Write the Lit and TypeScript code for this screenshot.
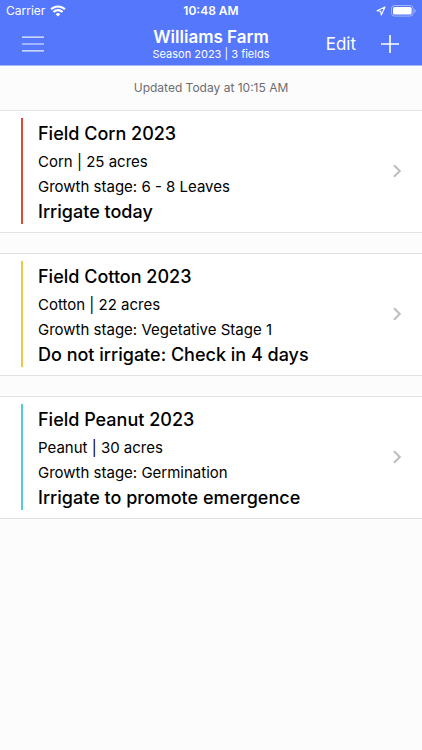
import { LitElement, html, css } from "lit";
import { customElement, property } from "lit/decorators.js";

interface Field {
  name: string;
  crop: string;
  acres: number;
  stage: string;
  advice: string;
  status: "urgent" | "wait" | "emerge";
}

const FIELDS: Field[] = [
  { name: "Field Corn 2023", crop: "Corn", acres: 25, stage: "6 - 8 Leaves", advice: "Irrigate today", status: "urgent" },
  { name: "Field Cotton 2023", crop: "Cotton", acres: 22, stage: "Vegetative Stage 1", advice: "Do not irrigate: Check in 4 days", status: "wait" },
  { name: "Field Peanut 2023", crop: "Peanut", acres: 30, stage: "Germination", advice: "Irrigate to promote emergence", status: "emerge" },
];

@customElement("status-bar")
export class StatusBar extends LitElement {
  static styles = css`
    :host {
      display: grid;
      grid-template-columns: 1fr auto 1fr;
      align-items: center;
      height: 22px;
      padding: 0 6px;
      font-size: 12px;
      line-height: 22px;
    }
    .side { display: flex; align-items: center; gap: 5px; }
    .end { justify-content: flex-end; }
    .time { font-weight: 600; }
    svg { display: block; }
  `;

  render() {
    return html`
      <div class="side">
        <span>Carrier</span>
        <svg width="16" height="12" viewBox="0 0 16 12" fill="none" stroke="#fff" stroke-width="2.1" aria-hidden="true">
          <path d="M1.1 4.3a9.8 9.8 0 0 1 13.8 0" />
          <path d="M3.5 7a6.3 6.3 0 0 1 9 0" />
          <path d="M8 11.6 5.7 9.2a3.3 3.3 0 0 1 4.6 0Z" fill="#fff" stroke="none" />
        </svg>
      </div>
      <span class="time">10:48 AM</span>
      <div class="side end">
        <svg width="10" height="10" viewBox="0 0 10 10" fill="none" stroke="#fff" stroke-width="1.1" stroke-linejoin="round" aria-hidden="true">
          <path d="M9 1 1 4.8l3.7.5.6 3.7Z" />
        </svg>
        <svg width="25" height="12" viewBox="0 0 25 12" aria-hidden="true">
          <rect x=".5" y=".5" width="21.6" height="10.6" rx="3" fill="none" stroke="#fff" stroke-opacity=".45" />
          <rect x="2" y="2" width="18.6" height="7.6" rx="1.6" fill="#fff" />
          <path d="M23.3 4v3.8a2 2 0 0 0 0-3.8Z" fill="#fff" fill-opacity=".5" />
        </svg>
      </div>
    `;
  }
}

@customElement("field-card")
export class FieldCard extends LitElement {
  @property({ attribute: false }) field!: Field;

  static styles = css`
    :host { display: block; }
    .card {
      display: flex;
      align-items: center;
      padding: 7px 20px 8px 21px;
      background: #fff;
      border-top: 1px solid #e2e2e5;
      border-bottom: 1px solid #e2e2e5;
      color: #000;
      text-decoration: none;
    }
    .body { flex: 1; padding-left: 15px; border-left: 2px solid; }
    .urgent { border-color: #dc4a2b; }
    .wait { border-color: #f0c648; }
    .emerge { border-color: #55cbd6; }
    h2, p { margin: 0; font-weight: 400; font-size: 15px; line-height: 26px; }
    .meta { line-height: 24px; }
    h2 { font-size: 18px; font-weight: 500; line-height: 32px; }
    .advice { font-size: 18px; font-weight: 500; line-height: 24px; }
    svg { display: block; }
  `;

  render() {
    const f = this.field;
    return html`
      <a class="card" href="#">
        <div class="body ${f.status}">
          <h2>${f.name}</h2>
          <p class="meta">${f.crop} | ${f.acres} acres</p>
          <p>Growth stage: ${f.stage}</p>
          <p class="advice">${f.advice}</p>
        </div>
        <svg width="10" height="14" viewBox="0 0 10 14" fill="none" stroke="#bdbdbf" stroke-width="2" aria-hidden="true">
          <path d="M2 1.2 7.8 7 2 12.8" />
        </svg>
      </a>
    `;
  }
}

@customElement("app-root")
export class AppRoot extends LitElement {
  static styles = css`
    :host {
      display: block;
      min-height: 100vh;
      background: #fcfcfc;
      font-family: Inter, "Liberation Sans", sans-serif;
    }
    .top { background: #5577fb; color: #fff; border-bottom: 1px solid #a9b8f5; }
    nav {
      display: grid;
      grid-template-columns: 1fr auto 1fr;
      align-items: center;
      height: 43px;
      padding: 0 22px;
    }
    .title { text-align: center; }
    h1 { margin: 0; font-size: 17px; font-weight: 600; line-height: 20px; }
    .season { margin: 0; font-size: 11px; line-height: 14px; }
    .actions { display: flex; justify-content: flex-end; align-items: center; gap: 24px; }
    button {
      padding: 0;
      border: 0;
      background: none;
      color: inherit;
      font: inherit;
      font-size: 17px;
      line-height: 24px;
      justify-self: start;
      cursor: pointer;
    }
    svg { display: block; }
    .updated {
      margin: 0;
      font-size: 12px;
      line-height: 44px;
      text-align: center;
      color: #6d6d70;
    }
    .list { display: flex; flex-direction: column; gap: 20px; }
  `;

  render() {
    return html`
      <header class="top">
        <status-bar></status-bar>
        <nav>
          <button aria-label="Menu">
            <svg width="22" height="16" viewBox="1 0 22 16" stroke="#fff" stroke-width="1.2" stroke-opacity=".9">
              <path d="M1 1.2h22M1 8h22M1 14.8h22" />
            </svg>
          </button>
          <div class="title">
            <h1>Williams Farm</h1>
            <p class="season">Season 2023 | 3 fields</p>
          </div>
          <div class="actions">
            <button>Edit</button>
            <button aria-label="Add field">
              <svg width="20" height="20" viewBox="0 0 20 20" stroke="#fff" stroke-width="1.6">
                <path d="M1 10h18M10 1v18" />
              </svg>
            </button>
          </div>
        </nav>
      </header>
      <main>
        <p class="updated">Updated Today at 10:15 AM</p>
        <div class="list">
          ${FIELDS.map((f) => html`<field-card .field=${f}></field-card>`)}
        </div>
      </main>
    `;
  }
}
